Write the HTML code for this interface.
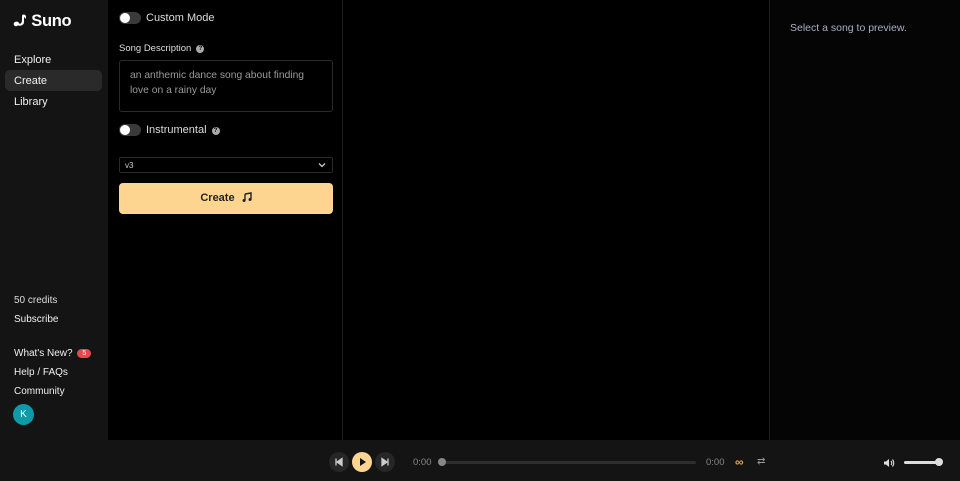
<!DOCTYPE html>
<html><head><style>
*{box-sizing:border-box;margin:0;padding:0}
body{width:960px;height:481px;background:#000;font-family:"Liberation Sans",sans-serif;color:#e5e5e5;position:relative;overflow:hidden;font-size:10px}
.side{position:absolute;left:0;top:0;width:108px;height:440px;background:#141414}
.logo{position:absolute;left:13px;top:12px;font-size:16.5px;color:#fff;font-weight:bold;letter-spacing:-0.3px}
.nav{position:absolute;left:14px;font-size:11px;color:#f0f0f0}
.act{position:absolute;left:5px;top:70px;width:97px;height:21px;background:#2a2a2a;border-radius:5px}
.form{position:absolute;left:108px;top:0;width:235px;height:440px;background:#000;border-right:1px solid #1c1c1c}
.tog{position:absolute;left:11px;width:22px;height:12px;border-radius:6px;background:#3a3a3a}
.tog:after{content:"";position:absolute;left:1px;top:1px;width:10px;height:10px;border-radius:50%;background:#fff}
.lbl{position:absolute;font-size:11px;color:#ddd}
.q{display:inline-block;width:8px;height:8px;border-radius:50%;background:#aaa;color:#000;font-size:6px;text-align:center;line-height:8px;font-weight:bold;vertical-align:1px;margin-left:5px}
.ta{position:absolute;left:11px;top:60px;width:214px;height:52px;border:1px solid #2a2a2a;border-radius:3px;padding:7px 20px 7px 10px;font-size:10.3px;line-height:15px;color:#9a9a9a}
.sel{position:absolute;left:11px;top:157px;width:214px;height:16px;border:1px solid #2a2a2a;border-radius:2px;font-size:8px;color:#ccc;padding:3px 5px}
.btn{position:absolute;left:11px;top:183px;width:214px;height:31px;background:#fdd590;border-radius:4px;color:#222;font-size:11px;text-align:center;line-height:31px;font-weight:bold}
.right{position:absolute;left:769px;top:0;width:191px;height:440px;border-left:1px solid #1c1c1c;background:#050505}
.bar{position:absolute;left:0;top:440px;width:960px;height:41px;background:#141414}
.cb{position:absolute;top:12px;width:20px;height:20px;border-radius:50%;background:#262626}
.sm{font-size:10px}
</style></head><body>
<div class="side">
<div class="logo"><svg width="14" height="13" viewBox="0 0 14 13" style="vertical-align:-1px"><path d="M1 10 C2 7 5 7 6 9 C7 11 9 9 9 6 L9 2 C9 0 12 0 13 2 L13 5 L11 3 L11 8 C11 12 5 13 4 10 C3 9 2 10 1 10Z" fill="#fff"/><circle cx="3" cy="10" r="2.3" fill="#fff"/></svg> Suno</div>
<div class="act"></div>
<div class="nav" style="top:54px">Explore</div>
<div class="nav" style="top:75px">Create</div>
<div class="nav" style="top:96px">Library</div>
<div class="nav sm" style="top:295px;color:#ddd">50 credits</div>
<div class="nav sm" style="top:314px">Subscribe</div>
<div class="nav sm" style="top:348px">What's New? <span style="display:inline-block;background:#e5484d;color:#fff;border-radius:6px;font-size:7px;padding:1px 5px;margin-left:2px;vertical-align:1px">5</span></div>
<div class="nav sm" style="top:367px">Help / FAQs</div>
<div class="nav sm" style="top:386px">Community</div>
<div style="position:absolute;left:13px;top:404px;width:21px;height:21px;border-radius:50%;background:#0e9aa7;color:#fff;font-size:10px;text-align:center;line-height:21px">K</div>
</div>
<div class="form">
<div class="tog" style="top:12px"></div><div class="lbl" style="left:38px;top:12px">Custom Mode</div>
<div class="lbl" style="left:11px;top:43px;font-size:9.5px">Song Description<span class="q">?</span></div>
<div class="ta">an anthemic dance song about finding love on a rainy day</div>
<div class="tog" style="top:124px"></div><div class="lbl" style="left:38px;top:124px">Instrumental<span class="q">?</span></div>
<div class="sel">v3<svg width="8" height="6" style="position:absolute;right:6px;top:4px" viewBox="0 0 8 6"><path d="M1 1.5L4 4.5L7 1.5" stroke="#ccc" stroke-width="1.3" fill="none"/></svg></div>
<div class="btn">Create <svg width="10" height="10" viewBox="0 0 10 10" style="vertical-align:-1px;margin-left:4px"><path d="M3 2L9 1V7.5M3 2V8.5" stroke="#222" stroke-width="1.4" fill="none"/><circle cx="2" cy="8.5" r="1.5" fill="#222"/><circle cx="8" cy="7.5" r="1.5" fill="#222"/></svg></div>
</div>
<div class="right"><div style="position:absolute;left:20px;top:22px;font-size:10.5px;color:#a8b0c4">Select a song to preview.</div></div>
<div class="bar">
<div class="cb" style="left:329px"><svg width="20" height="20" viewBox="0 0 20 20"><path d="M7 6.5V13.5M13 6.5L8 10L13 13.5Z" stroke="#ccc" fill="#ccc" stroke-width="1.3"/></svg></div>
<div class="cb" style="left:352px;background:#fdd590"><svg width="20" height="20" viewBox="0 0 20 20"><path d="M8 6L14 10L8 14Z" fill="#111"/></svg></div>
<div class="cb" style="left:375px"><svg width="20" height="20" viewBox="0 0 20 20"><path d="M13 6.5V13.5M7 6.5L12 10L7 13.5Z" stroke="#ccc" fill="#ccc" stroke-width="1.3"/></svg></div>
<div style="position:absolute;left:413px;top:17px;font-size:9.5px;color:#888">0:00</div>
<div style="position:absolute;left:440px;top:21px;width:256px;height:3px;background:#2e2e2e;border-radius:2px"></div>
<div style="position:absolute;left:438px;top:18px;width:8px;height:8px;border-radius:50%;background:#888"></div>
<div style="position:absolute;left:706px;top:17px;font-size:9.5px;color:#888">0:00</div>
<div style="position:absolute;left:735px;top:15px;font-size:12px;color:#e0a84a;font-weight:bold">∞</div>
<div style="position:absolute;left:757px;top:16px;font-size:10px;color:#999">⇄</div>
<svg style="position:absolute;left:883px;top:18px" width="12" height="10" viewBox="0 0 12 10"><path d="M1 3.5H3L6 1V9L3 6.5H1Z" fill="#ddd"/><path d="M8 3Q9.5 5 8 7M9.5 1.5Q12 5 9.5 8.5" stroke="#ddd" fill="none" stroke-width="1.1"/></svg>
<div style="position:absolute;left:904px;top:21px;width:36px;height:3px;background:#ddd;border-radius:2px"></div>
<div style="position:absolute;left:935px;top:18px;width:8px;height:8px;border-radius:50%;background:#ddd"></div>
</div>
</body></html>
